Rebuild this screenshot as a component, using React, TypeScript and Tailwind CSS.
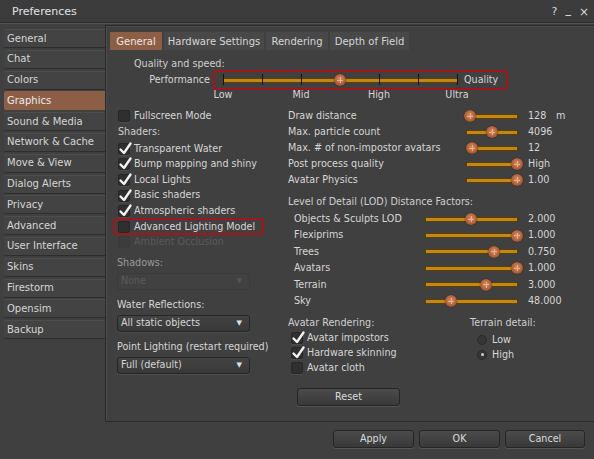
import React from 'react'

const sideItems = [
  'General',
  'Chat',
  'Colors',
  'Graphics',
  'Sound & Media',
  'Network & Cache',
  'Move & View',
  'Dialog Alerts',
  'Privacy',
  'Advanced',
  'User Interface',
  'Skins',
  'Firestorm',
  'Opensim',
  'Backup',
]

const tabs = [
  { label: 'General', w: 'w-[52px]', active: true },
  { label: 'Hardware Settings', w: 'w-[100px]' },
  { label: 'Rendering', w: 'w-[62px]' },
  { label: 'Depth of Field', w: 'w-[79px]' },
]

const shaders = [
  { label: 'Transparent Water', on: true },
  { label: 'Bump mapping and shiny', on: true },
  { label: 'Local Lights', on: true },
  { label: 'Basic shaders', on: true },
  { label: 'Atmospheric shaders', on: true },
]

const topSliders = [
  { label: 'Draw distance', pos: 3, value: '128', unit: 'm' },
  { label: 'Max. particle count', pos: 25, value: '4096' },
  { label: 'Max. # of non-impostor avatars', pos: 5, value: '12' },
  { label: 'Post process quality', pos: 50, value: 'High' },
  { label: 'Avatar Physics', pos: 50, value: '1.00' },
]

const lodSliders = [
  { label: 'Objects & Sculpts LOD', pos: 45, value: '2.000' },
  { label: 'Flexiprims', pos: 91, value: '1.000' },
  { label: 'Trees', pos: 68, value: '0.750' },
  { label: 'Avatars', pos: 91, value: '1.000' },
  { label: 'Terrain', pos: 60, value: '3.000' },
  { label: 'Sky', pos: 25, value: '48.000' },
]

function Check({ on, disabled }: { on?: boolean; disabled?: boolean }) {
  return (
    <div
      className={`relative h-[12px] w-[12px] shrink-0 rounded-[2px] border ${
        disabled ? 'border-[#3a3a3a] bg-[#3c3c3c]' : 'border-[#262626] bg-[#2f2f2f] shadow-[0_1px_0_#4e4e4e]'
      }`}
    >
      {on && (
        <svg className="absolute -left-[1px] -top-[3px]" width="15" height="15" viewBox="0 0 15 15">
          <path d="M2.5 8.5 L6 12 L12.5 2.5" fill="none" stroke="#f2f2f2" strokeWidth="2.4" strokeLinecap="round" strokeLinejoin="round" />
        </svg>
      )}
    </div>
  )
}

function Knob({ left }: { left: number }) {
  return (
    <div
      className="absolute top-1/2 h-[12px] w-[12px] -translate-y-1/2 rounded-full bg-[radial-gradient(circle_at_50%_45%,#d99064_0%,#b0623a_55%,#6e3618_100%)] shadow-[0_0_1px_#000]"
      style={{ left: left - 6 }}
    >
      <div className="absolute left-[5.5px] top-[3px] h-[6px] w-[1px] bg-[#e8b090]" />
      <div className="absolute left-[3px] top-[5.5px] h-[1px] w-[6px] bg-[#e8b090]" />
    </div>
  )
}

function Slider({ width, pos }: { width: string; pos: number }) {
  return (
    <div className={`relative h-[12px] ${width} shrink-0`}>
      <div className="absolute left-0 right-0 top-[4.5px] h-[3px] bg-[#c4870f] shadow-[0_0_0_1px_#5a3e0c]" />
      <Knob left={pos} />
    </div>
  )
}

function Dropdown({ label, disabled }: { label: string; disabled?: boolean }) {
  return (
    <div
      className={`ml-[4px] flex h-[17px] w-[133px] items-center justify-between rounded-[3px] border px-[3px] ${
        disabled
          ? 'border-[#3a3a3a] bg-[#414141] text-[#5a5a5a]'
          : 'border-[#262626] bg-gradient-to-b from-[#444444] to-[#383838] shadow-[0_1px_0_#4d4d4d]'
      }`}
    >
      <span>{label}</span>
      <span className={`mr-[4px] text-[7px] ${disabled ? 'text-[#555555]' : 'text-[#e0e0e0]'}`}>▼</span>
    </div>
  )
}

function Button({ label, w }: { label: string; w: string }) {
  return (
    <div
      className={`flex h-[18px] ${w} items-center justify-center rounded-[3px] border border-[#252525] bg-gradient-to-b from-[#4b4b4b] to-[#393939] text-[#dcdcdc] shadow-[0_1px_0_#555555]`}
    >
      {label}
    </div>
  )
}

function Radio({ on }: { on?: boolean }) {
  return (
    <div className="flex h-[10px] w-[10px] shrink-0 items-center justify-center rounded-full border border-[#2a2a2a] bg-[#363636]">
      {on && <div className="h-[3px] w-[3px] rounded-full bg-[#cfcfcf]" />}
    </div>
  )
}

export default function App() {
  return (
    <div className="flex h-[459px] w-[594px] flex-col overflow-hidden bg-[#404040] font-['DejaVu_Sans',sans-serif] text-[9.6px] text-[#d6d6d6]">
      {/* title bar */}
      <div className="flex h-[23px] shrink-0 items-center border-b border-[#2b2b2b] bg-[#3c3c3c] pl-[12px] pr-[5px] pt-[2px] shadow-[0_1px_0_#525252]">
        <span className="text-[11px] text-[#e2e2e2]">Preferences</span>
        <div className="ml-auto flex items-center gap-[8px] text-[11px] text-[#d8d8d8]">
          <span>?</span>
          <span className="-mt-[4px] font-bold">_</span>
          <span className="text-[12px]">×</span>
        </div>
      </div>

      <div className="flex shrink-0">
        {/* sidebar */}
        <div className="flex w-[105px] shrink-0 flex-col gap-[1.8px] pl-[4px] pt-[6px]">
          {sideItems.map((s) => (
            <div
              key={s}
              className={`flex h-[19px] items-center rounded-l-[2px] pl-[3px] text-[10px] ${
                s === 'Graphics'
                  ? 'bg-[#8c5e46] text-[#ececec]'
                  : 'border-b border-[#2e2e2e] bg-[#434343] shadow-[inset_0_1px_0_#4d4d4d]'
              }`}
            >
              {s}
            </div>
          ))}
        </div>

        {/* tab panel */}
        <div className="mt-[2px] flex h-[397px] flex-1 flex-col border-b border-l border-t border-[#2a2a2a] shadow-[inset_1px_1px_0_#4c4c4c]">
          <div className="flex gap-[2px] pl-[4px] pt-[6px]">
            {tabs.map((t) => (
              <div
                key={t.label}
                className={`flex h-[18px] ${t.w} items-center justify-center text-[10px] ${
                  t.active ? 'bg-[#8c5e46] text-[#f0e6e0]' : 'bg-[#484848]'
                }`}
              >
                {t.label}
              </div>
            ))}
          </div>

          {/* quality and speed */}
          <div className="ml-[28px] mt-[9px] h-[10px] leading-[10px] text-[#cfcfcf]">Quality and speed:</div>
          <div className="mt-[1px] flex h-[20px] items-center">
            <div className="w-[105px] pr-[1px] text-right">Performance</div>
            <div className="ml-[2px] flex h-[20px] w-[295px] items-center rounded-[4px] border-2 border-[#a0161a]">
              <div className="relative ml-[8px] h-[14px] w-[234px]">
                <div className="absolute left-0 right-0 top-[5.5px] h-[3px] bg-[#c4870f] shadow-[0_0_0_1px_#5a3e0c]" />
                {[0, 39, 78, 117, 156, 195, 234].map((x) => (
                  <div key={x} className="absolute top-[1px] h-[11px] w-[1.5px] bg-[#111111]" style={{ left: x - 0.5 }} />
                ))}
                <Knob left={117} />
              </div>
              <span className="ml-[7px]">Quality</span>
            </div>
          </div>
          <div className="ml-[78px] flex h-[10px] leading-[10px]">
            {['Low', 'Mid', 'High', 'Ultra'].map((l) => (
              <div key={l} className="w-[78px] text-center">
                {l}
              </div>
            ))}
          </div>

          <div className="mt-[8px] flex">
            {/* left column */}
            <div className="ml-[7px] flex w-[175px] flex-col">
              <div className="flex h-[16px] items-center gap-[4px] pl-[5px]">
                <Check />
                <span>Fullscreen Mode</span>
              </div>
              <div className="flex h-[16px] items-center pl-[5px] text-[#cfcfcf]">Shaders:</div>
              <div className="mt-[1px] flex flex-col">
                {shaders.map((s) => (
                  <div key={s.label} className="flex h-[15.6px] items-center gap-[4px] pl-[5px]">
                    <Check on={s.on} />
                    <span>{s.label}</span>
                  </div>
                ))}
                <div className="relative flex h-[15.6px] items-center gap-[4px] pl-[5px]">
                  <Check />
                  <span>Advanced Lighting Model</span>
                  <div className="absolute left-0 top-[-1px] h-[17.5px] w-[151px] rounded-[4px] border-2 border-[#a0161a]" />
                </div>
                <div className="flex h-[15.6px] items-center gap-[4px] pl-[5px] text-[#5a5a5a]">
                  <Check disabled />
                  <span>Ambient Occlusion</span>
                </div>
              </div>
              <div className="mt-[7px] flex h-[12px] items-center pl-[4px] text-[#9a9a9a]">Shadows:</div>
              <div className="mt-[4px]">
                <Dropdown label="None" disabled />
              </div>
              <div className="mt-[9px] flex h-[12px] items-center pl-[4px]">Water Reflections:</div>
              <div className="mt-[4px]">
                <Dropdown label="All static objects" />
              </div>
              <div className="mt-[9px] flex h-[12px] items-center pl-[4px]">Point Lighting (restart required)</div>
              <div className="mt-[4px]">
                <Dropdown label="Full (default)" />
              </div>
            </div>

            {/* right column */}
            <div className="flex flex-1 flex-col">
              {topSliders.map((s) => (
                <div key={s.label} className="flex h-[16px] items-center">
                  <span className="w-[179px] shrink-0">{s.label}</span>
                  <Slider width="w-[50px]" pos={s.pos} />
                  <span className="ml-[11px] w-[28px]">{s.value}</span>
                  {s.unit && <span>{s.unit}</span>}
                </div>
              ))}
              <div className="mt-[8px] flex h-[12px] items-center text-[#cfcfcf]">Level of Detail (LOD) Distance Factors:</div>
              <div className="mt-[3px] flex flex-col">
                {lodSliders.map((s) => (
                  <div key={s.label} className="flex h-[16.4px] items-center">
                    <span className="w-[138px] shrink-0 pl-[6px]">{s.label}</span>
                    <Slider width="w-[91px]" pos={s.pos} />
                    <span className="ml-[11px]">{s.value}</span>
                  </div>
                ))}
              </div>
              <div className="mt-[8px] flex">
                <div className="flex w-[182px] flex-col">
                  <div className="flex h-[12px] items-center text-[#cfcfcf]">Avatar Rendering:</div>
                  <div className="mt-[1.5px] flex flex-col">
                    {[
                      { label: 'Avatar impostors', on: true },
                      { label: 'Hardware skinning', on: true },
                      { label: 'Avatar cloth', on: false },
                    ].map((c) => (
                      <div key={c.label} className="flex h-[15px] items-center gap-[4px] pl-[3px]">
                        <Check on={c.on} />
                        <span>{c.label}</span>
                      </div>
                    ))}
                  </div>
                  <div className="ml-[9px] mt-[12px]">
                    <Button label="Reset" w="w-[103px]" />
                  </div>
                </div>
                <div className="flex flex-col">
                  <div className="flex h-[12px] items-center text-[#cfcfcf]">Terrain detail:</div>
                  <div className="mt-[3px] flex flex-col pl-[7px]">
                    <div className="flex h-[15px] items-center gap-[5px]">
                      <Radio />
                      <span>Low</span>
                    </div>
                    <div className="flex h-[15px] items-center gap-[5px]">
                      <Radio on />
                      <span>High</span>
                    </div>
                  </div>
                </div>
              </div>
            </div>
          </div>
        </div>
      </div>

      {/* dialog buttons */}
      <div className="mt-[8px] flex justify-end gap-[5px] pr-[9px]">
        <Button label="Apply" w="w-[81px]" />
        <Button label="OK" w="w-[81px]" />
        <Button label="Cancel" w="w-[80px]" />
      </div>
    </div>
  )
}
